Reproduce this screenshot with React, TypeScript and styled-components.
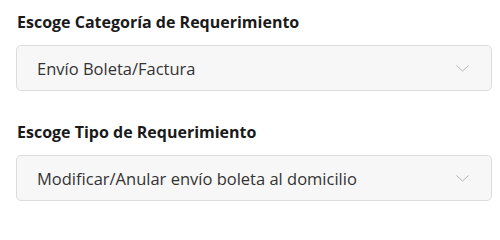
import React from "react";
import styled, { createGlobalStyle } from "styled-components";

const GlobalStyle = createGlobalStyle`
  html, body {
    margin: 0;
    padding: 0;
    background: #ffffff;
  }
`;

const Form = styled.div`
  display: flex;
  flex-direction: column;
  gap: 29px;
  padding: 10px 8px 0 16px;
  font-family: "Open Sans", "Noto Sans", sans-serif;
`;

const Field = styled.div`
  display: flex;
  flex-direction: column;
  gap: 11px;
`;

const Label = styled.label`
  font-size: 16px;
  font-weight: 700;
  line-height: 24px;
  color: #1a1a1a;
  padding-left: 1px;
`;

const SelectBox = styled.div`
  display: flex;
  align-items: center;
  justify-content: space-between;
  height: 46px;
  box-sizing: border-box;
  padding: 0 22px 0 20px;
  border: 1px solid #dcdcdc;
  border-radius: 5px;
  background: #f7f7f7;
  font-size: 16.5px;
  color: #333333;
`;

const Chevron = () => (
  <svg width="13" height="7" viewBox="0 0 13 7" fill="none">
    <path d="M0.5 0.5 L6.5 6 L12.5 0.5" stroke="#b5b5b5" strokeWidth="1" />
  </svg>
);

interface SelectProps {
  label: string;
  value: string;
}

const Select = (props: SelectProps) => (
  <Field>
    <Label>{props.label}</Label>
    <SelectBox>
      <span>{props.value}</span>
      <Chevron />
    </SelectBox>
  </Field>
);

export default function App() {
  return (
    <>
      <GlobalStyle />
      <Form>
        <Select label="Escoge Categoría de Requerimiento" value="Envío Boleta/Factura" />
        <Select
          label="Escoge Tipo de Requerimiento"
          value="Modificar/Anular envío boleta al domicilio"
        />
      </Form>
    </>
  );
}
